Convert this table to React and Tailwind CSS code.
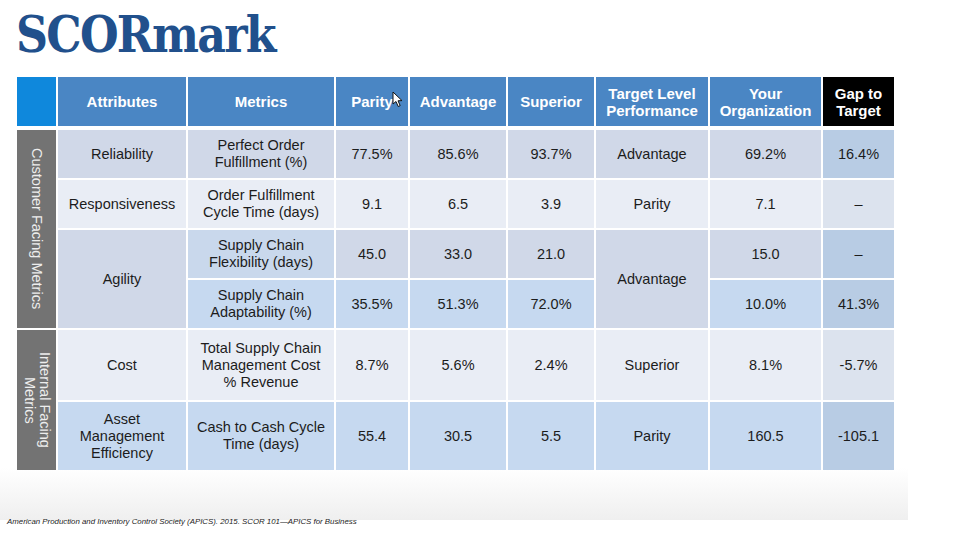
import React from 'react';

const L = 'bg-[#d0d8e8]';
const W = 'bg-[#e9edf5]';
const B = 'bg-[#c6d9f0]';
const G1 = 'bg-[#b8cce4]';
const G2 = 'bg-[#dce3ee]';

const headers = [
  'Attributes',
  'Metrics',
  'Parity',
  'Advantage',
  'Superior',
  'Target Level\nPerformance',
  'Your\nOrganization',
];

// each cell: [text, bg, grid placement]
const body = [
  [
    ['Reliability', L, 'col-start-2 row-start-2'],
    ['Perfect Order\nFulfillment (%)', L, 'col-start-3 row-start-2'],
    ['77.5%', L, 'col-start-4 row-start-2'],
    ['85.6%', L, 'col-start-5 row-start-2'],
    ['93.7%', L, 'col-start-6 row-start-2'],
    ['Advantage', L, 'col-start-7 row-start-2'],
    ['69.2%', L, 'col-start-8 row-start-2'],
    ['16.4%', G1, 'col-start-9 row-start-2'],
  ],
  [
    ['Responsiveness', W, 'col-start-2 row-start-3'],
    ['Order Fulfillment\nCycle Time (days)', W, 'col-start-3 row-start-3'],
    ['9.1', W, 'col-start-4 row-start-3'],
    ['6.5', W, 'col-start-5 row-start-3'],
    ['3.9', W, 'col-start-6 row-start-3'],
    ['Parity', W, 'col-start-7 row-start-3'],
    ['7.1', W, 'col-start-8 row-start-3'],
    ['–', G2, 'col-start-9 row-start-3'],
  ],
  [
    ['Agility', L, 'col-start-2 row-start-4 row-span-2'],
    ['Supply Chain\nFlexibility (days)', 'bg-[#c9d8ec]', 'col-start-3 row-start-4'],
    ['45.0', L, 'col-start-4 row-start-4'],
    ['33.0', L, 'col-start-5 row-start-4'],
    ['21.0', L, 'col-start-6 row-start-4'],
    ['Advantage', L, 'col-start-7 row-start-4 row-span-2'],
    ['15.0', L, 'col-start-8 row-start-4'],
    ['–', G1, 'col-start-9 row-start-4'],
  ],
  [
    ['Supply Chain\nAdaptability (%)', B, 'col-start-3 row-start-5'],
    ['35.5%', B, 'col-start-4 row-start-5'],
    ['51.3%', B, 'col-start-5 row-start-5'],
    ['72.0%', B, 'col-start-6 row-start-5'],
    ['10.0%', B, 'col-start-8 row-start-5'],
    ['41.3%', G1, 'col-start-9 row-start-5'],
  ],
  [
    ['Cost', W, 'col-start-2 row-start-6'],
    ['Total Supply Chain\nManagement Cost\n% Revenue', W, 'col-start-3 row-start-6'],
    ['8.7%', W, 'col-start-4 row-start-6'],
    ['5.6%', W, 'col-start-5 row-start-6'],
    ['2.4%', W, 'col-start-6 row-start-6'],
    ['Superior', W, 'col-start-7 row-start-6'],
    ['8.1%', W, 'col-start-8 row-start-6'],
    ['-5.7%', G2, 'col-start-9 row-start-6'],
  ],
  [
    ['Asset\nManagement\nEfficiency', B, 'col-start-2 row-start-7'],
    ['Cash to Cash Cycle\nTime (days)', B, 'col-start-3 row-start-7'],
    ['55.4', B, 'col-start-4 row-start-7'],
    ['30.5', B, 'col-start-5 row-start-7'],
    ['5.5', B, 'col-start-6 row-start-7'],
    ['Parity', B, 'col-start-7 row-start-7'],
    ['160.5', B, 'col-start-8 row-start-7'],
    ['-105.1', G1, 'col-start-9 row-start-7'],
  ],
];

const Cursor = () => (
  <svg
    className="absolute left-[392px] top-[91px]"
    width="12"
    height="17"
    viewBox="0 0 12 17"
  >
    <path
      d="M1 1 L1 13 L4 10.5 L6.2 15.5 L8.2 14.6 L6 9.8 L10 9.6 Z"
      fill="#fff"
      stroke="#111"
      strokeWidth="1"
      strokeLinejoin="round"
    />
  </svg>
);

const App = () => {
  return (
    <div className="relative w-[960px] h-[540px] bg-white overflow-hidden font-['Liberation_Sans',Arial,sans-serif]">
      <div className="w-[908px] h-[520px] bg-gradient-to-b from-white from-[90%] to-[#efefef] flex flex-col">
        <h1 className="ml-[16px] mt-[6px] h-[71px] w-max origin-left scale-x-[0.87] text-[#21508c] text-[51px] leading-[56px] font-bold tracking-[-2px] font-['DejaVu_Serif','Liberation_Serif',serif]">
          SCORmark
        </h1>
        <div className="ml-[17px] grid grid-cols-[39px_128px_146px_72px_96px_86px_112px_111px_71px] grid-rows-[51px_48px_48px_48px_48px_70px_68px] gap-[2px] w-max">
          <div className="col-start-1 row-start-1 h-[49px] bg-[#0f88dc]" />
          {headers.map((h) => (
            <div
              key={h}
              className="row-start-1 h-[49px] bg-[#4a86c4] flex items-center justify-center text-center whitespace-pre-line text-white font-bold text-[15px] leading-[17px]"
            >
              {h}
            </div>
          ))}
          <div className="col-start-9 row-start-1 h-[49px] bg-black flex items-center justify-center text-center whitespace-pre-line text-white font-bold text-[15px] leading-[17px]">
            {'Gap to\nTarget'}
          </div>

          <div className="col-start-1 row-start-2 row-span-4 bg-[#737373] flex items-center justify-center">
            <span className="[writing-mode:vertical-rl] text-[#ededed] text-[14.5px] leading-[16px]">
              Customer Facing Metrics
            </span>
          </div>
          <div className="col-start-1 row-start-6 row-span-2 bg-[#737373] flex items-center justify-center">
            <span className="[writing-mode:vertical-rl] text-[#ededed] text-[14.5px] leading-[15px] text-center">
              {'Internal Facing\nMetrics'}
            </span>
          </div>

          {body.flat().map(([text, bg, pos], i) => (
            <div
              key={i}
              className={`${pos} ${bg} flex items-center justify-center text-center whitespace-pre-line text-[#1c1c1c] text-[14.5px] leading-[17px]`}
            >
              {text}
            </div>
          ))}
        </div>
      </div>
      <p className="ml-[7px] mt-[-3px] text-[7.85px] italic text-[#222] leading-[10px]">
        American Production and Inventory Control Society (APICS). 2015. SCOR 101—APICS for Business
      </p>
      <Cursor />
    </div>
  );
};

export default App;
